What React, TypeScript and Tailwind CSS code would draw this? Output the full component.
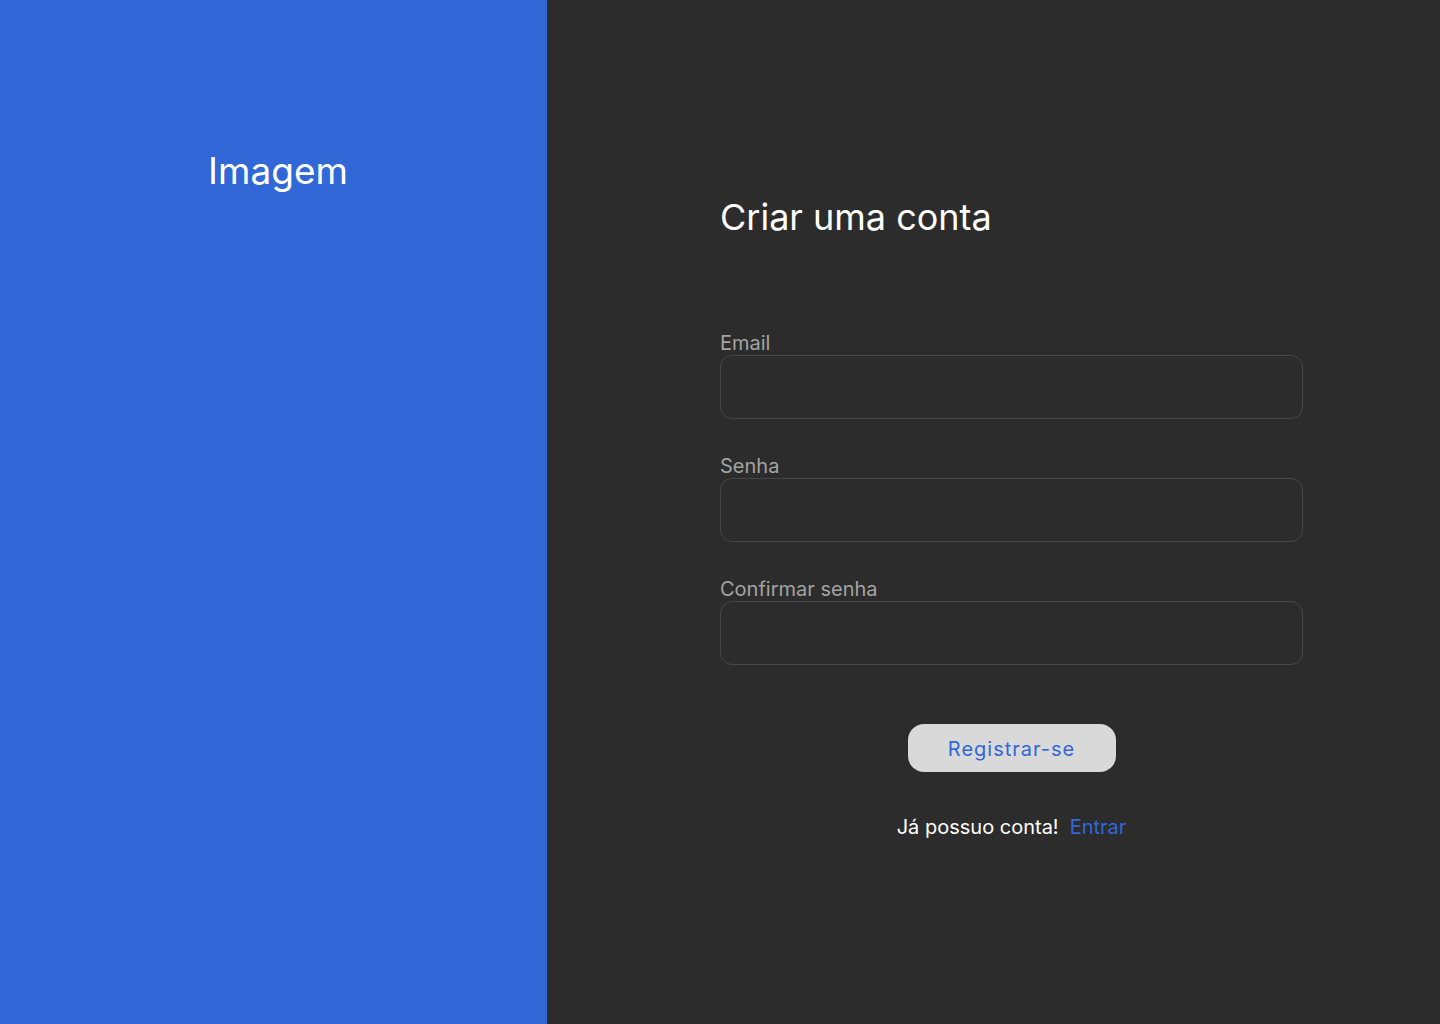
import React from "react";

export default function App() {
  return (
    <div className="flex h-[1024px] w-full" style={{ fontFamily: "Inter, 'Noto Sans', sans-serif" }}>
      <div className="w-[547px] shrink-0 bg-[#3167d6] flex justify-center pl-[9px] pt-[148px]">
        <span className="text-[37px] leading-[45px] text-white h-fit">Imagem</span>
      </div>
      <div className="flex-1 bg-[#2c2c2c] pl-[173px] pt-[195px]">
        <div className="w-[583px] flex flex-col">
          <h1 className="text-[36px] leading-[44px] text-white font-normal">Criar uma conta</h1>
          <div className="mt-[92px] flex flex-col gap-[35px]">
            {["Email", "Senha", "Confirmar senha"].map((label) => (
              <label key={label} className="flex flex-col">
                <span className="text-[20px] leading-[24px] text-[#a3a3a3]">{label}</span>
                <input
                  type={label === "Email" ? "email" : "password"}
                  className="h-[64px] w-full rounded-[12px] border border-[#464646] bg-transparent px-4 text-[18px] text-white outline-none"
                />
              </label>
            ))}
          </div>
          <button className="mt-[59px] self-center w-[208px] h-[48px] rounded-[16px] bg-[#d9d9d9] pt-[2px] text-[20px] leading-[24px] tracking-[1px] text-[#3167d6]">
            Registrar-se
          </button>
          <div className="mt-[43px] flex justify-center gap-[11px] text-[20px] leading-[24px]">
            <span className="text-white">Já possuo conta!</span>
            <a href="#" className="text-[#3167d6]">Entrar</a>
          </div>
        </div>
      </div>
    </div>
  );
}
